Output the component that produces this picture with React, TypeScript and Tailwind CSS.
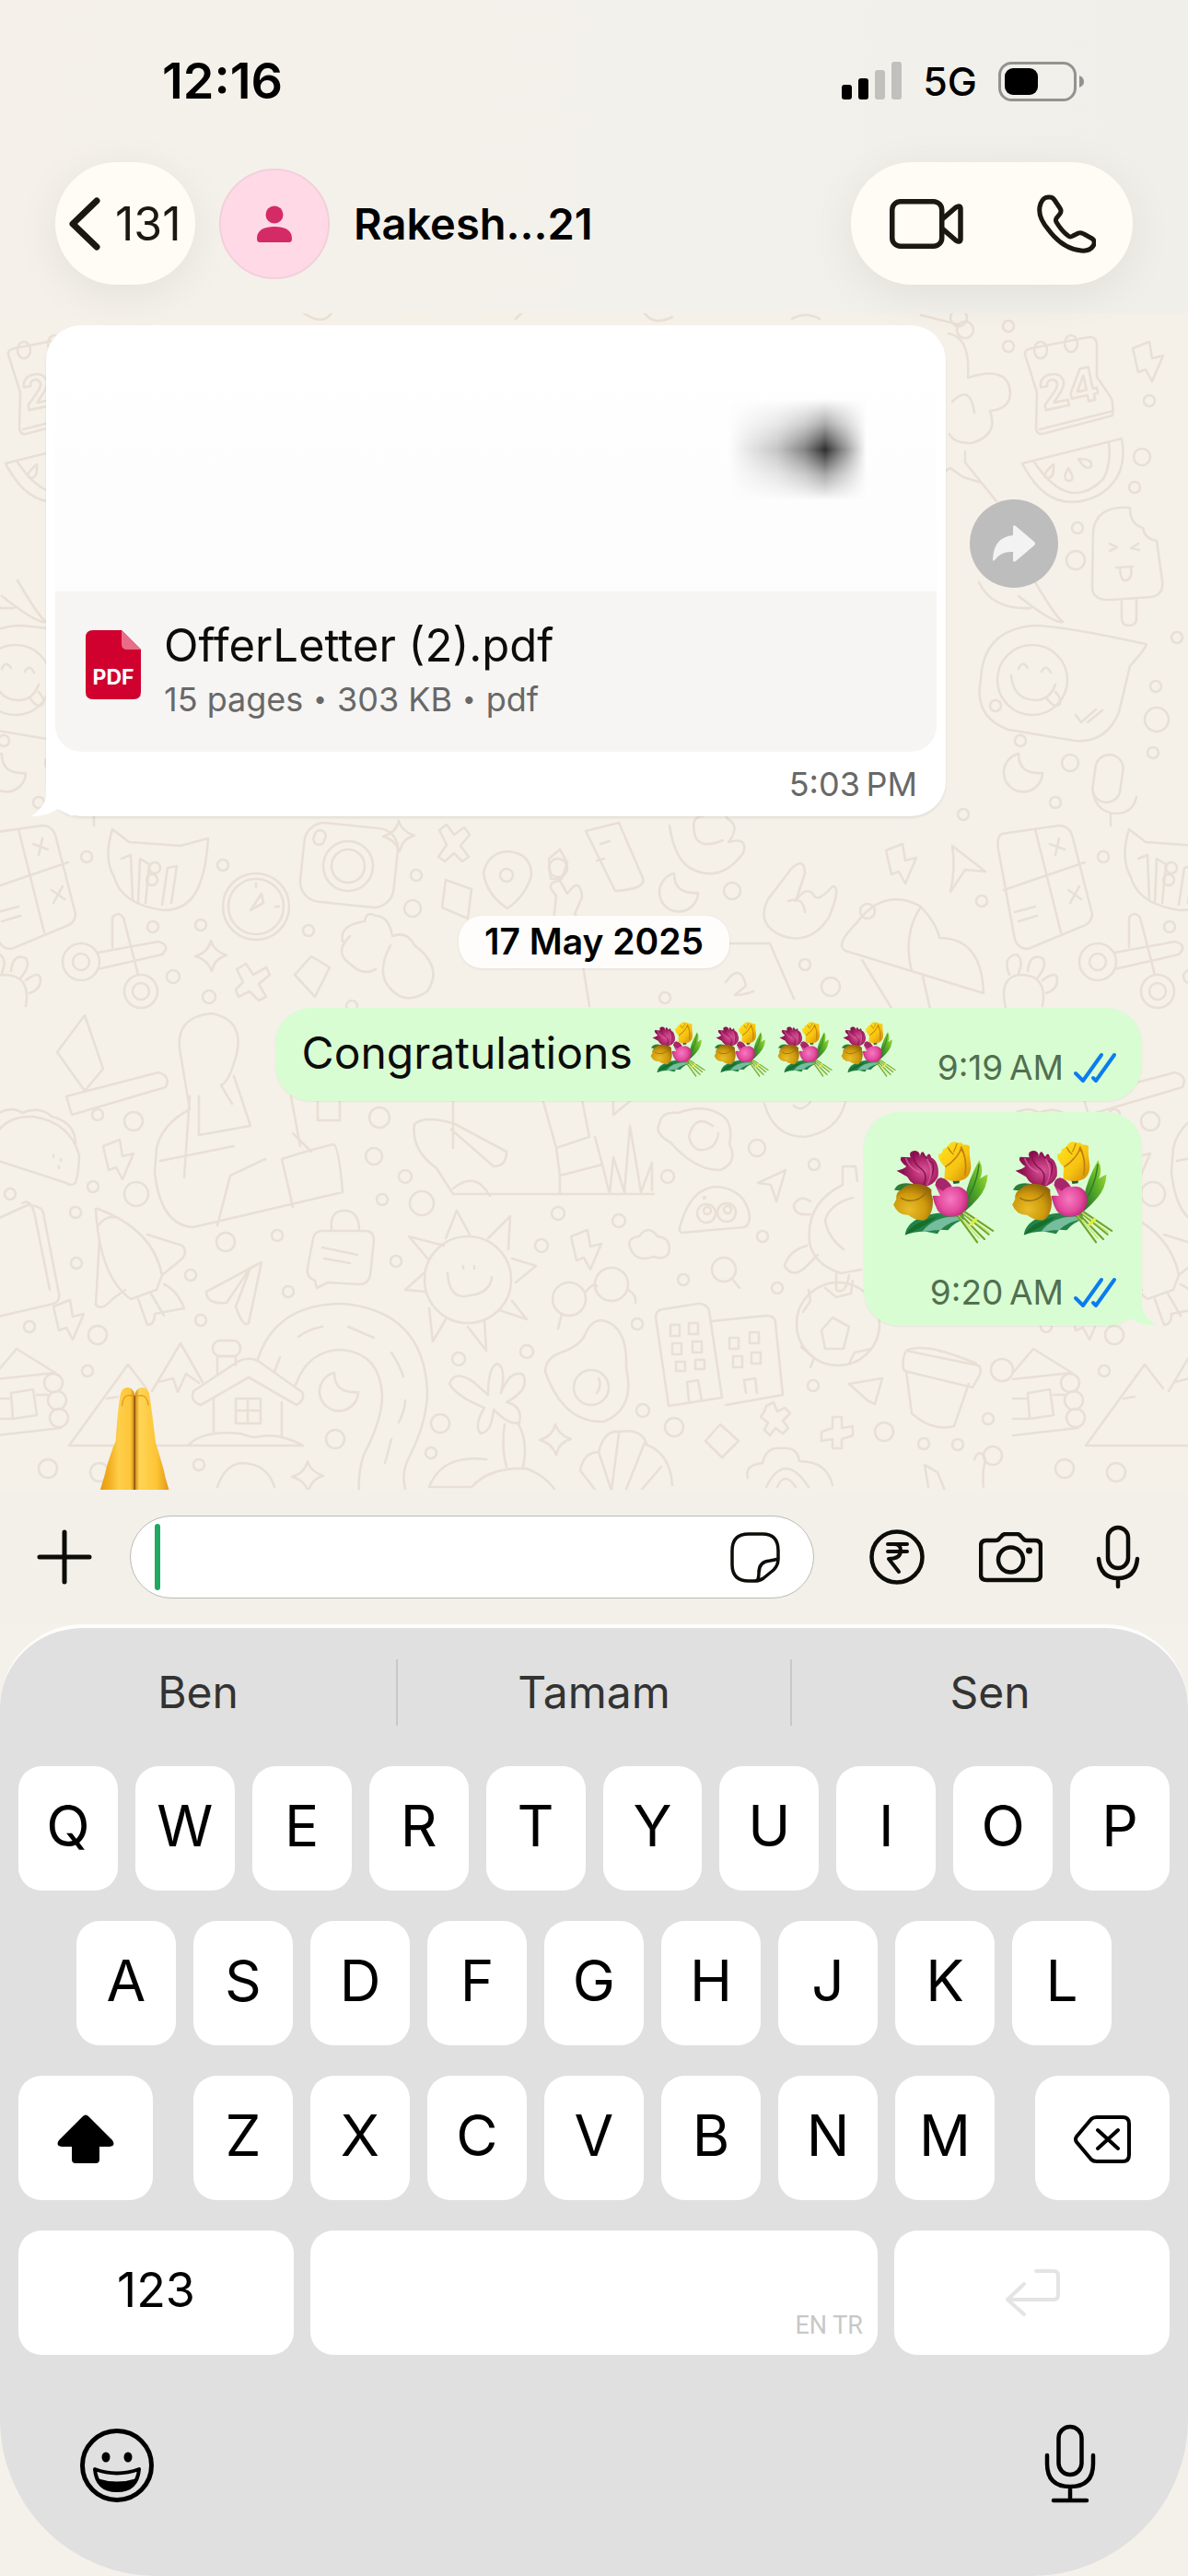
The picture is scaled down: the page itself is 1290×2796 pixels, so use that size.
import React from "react";

const doodle = { fill: "none", strokeLinecap: "round", strokeLinejoin: "round" } as const;

const DOTS: [number, number, number][] = [
  [-9, 354, 6], [-63, 345, 9], [-9, 376, 6], [144, 435, 6], [136, 496, 9], [128, 529, 6], [66, 573, 6], [64, 608, 10],
  [174, 692, 6], [151, 745, 6], [152, 781, 13], [-23, 766, 6], [4, 804, 6], [58, 828, 9], [148, 817, 6], [42, 871, 6],
  [94, 930, 6], [242, 939, 6], [452, 950, 6], [448, 986, 9], [606, 942, 10], [795, 967, 9], [942, 989, 8], [1046, 884, 6],
  [1066, 978, 6], [218, 1004, 6], [166, 1006, 6], [335, 1010, 6], [188, 1060, 7], [227, 1082, 7], [722, 1083, 6], [874, 1047, 6],
  [902, 1071, 10], [382, 1092, 6], [106, 1210, 6], [145, 1217, 10], [412, 1213, 11], [406, 1255, 9], [440, 1277, 7], [148, 1296, 13],
  [101, 1288, 6], [11, 1296, 6], [458, 1306, 13], [415, 1302, 6], [82, 1316, 6], [606, 1317, 7], [672, 1325, 7], [822, 1246, 9],
  [725, 1277, 7], [884, 1264, 6], [245, 1348, 10], [301, 1341, 6], [588, 1352, 7], [828, 1342, 6], [430, 1369, 6], [83, 1371, 6],
  [742, 1389, 6], [844, 1398, 6], [207, 1384, 6], [313, 1402, 6], [32, 1440, 6], [106, 1449, 10], [218, 1433, 6], [692, 1437, 6],
  [572, 1467, 7], [498, 1475, 7], [95, 1488, 6], [1088, 1487, 12], [883, 1504, 6], [698, 1531, 7], [478, 1545, 10], [364, 1562, 10],
  [468, 1577, 6], [52, 1594, 10], [108, 1598, 10], [216, 1590, 6], [732, 1549, 10], [960, 1554, 10], [1073, 1540, 6], [1003, 1567, 6],
  [1040, 1568, 6], [1078, 1580, 10], [765, 1300, 1], [650, 402, 8], [1048, 358, 9],
];

function bolt(x: number, y: number) {
  return `M${x} ${y + 8}l18 -7 3 18 12 -3 -12 28 -7 -13 -8 3z`;
}
function moon(x: number, y: number) {
  return `M${x + 18} ${y}a21 21 0 1 0 26 21q-26 2 -26 -21z`;
}
function sparkle(x: number, y: number) {
  return `M${x} ${y - 17}q3 11 17 16q-13 3 -16 17q-5 -13 -18 -16q14 -4 17 -17z`;
}

function Doodles() {
  return (
    <g {...doodle}>
      {DOTS.map(([x, y, r], i) => (
        <circle key={i} cx={x} cy={y} r={r} />
      ))}
      <path d={bolt(126, 370)} />
      <path d={bolt(962, 915)} />
      <path d={bolt(112, 1236)} />
      <path d={bolt(620, 1334)} />
      <path d={bolt(58, 1410)} />
      <path d={moon(-16, 818)} />
      <path d={moon(714, 948)} />
      <path d={moon(345, 1490)} />
      <path d={sparkle(433, 908)} />
      <path d={sparkle(229, 1038)} />
      <path d={sparkle(603, 1563)} />
      <path d={sparkle(334, 1603)} />
      {/* calendar */}
      <path d="M10 388q-4 -8 6 -10l62 -12q8 -1 9 7l0 36l15 22q3 5 2 20l-76 20q-6 1 -7 -6l1 -39z" />
      <path d="M25 466l80 -20" />
      <ellipse cx="26" cy="380" rx="7" ry="9" />
      <ellipse cx="59" cy="373" rx="7" ry="9" />
      <text x="24" y="440" fontSize="50" fontWeight="700" transform="rotate(-12 54 420)" className="font-['Inter',sans-serif]">24</text>
      {/* melon */}
      <path d="M6 503l108 -27q8 42 -26 62q-52 24 -82 -35zM18 500q38 58 76 20q9 -16 6 -40" />
      <path d="M40 504q-12 10 -9 14q10 4 9 -14zM56 508q-7 12 0 14q9 0 0 -14zM67 498q8 14 14 8q2 -8 -14 -8z" />
      {/* ice lolly */}
      <path d="M83 576q4 -28 40 -25q0 18 14 22q2 12 15 14l6 43q2 16 -12 18l-44 3q-20 1 -20 -14zM114 653l0 18q0 8 8 8q8 0 8 -8l0 -20" />
      <path d="M101 590l8 4l-8 4M132 590l-8 5l9 2M108 616l18 -1M112 616q1 16 7 14q7 -2 5 -14" />
      {/* speech bubble with face */}
      <path d="M18 679q30 0 122 20q4 0 -17 24l-12 50q-14 34 -48 31l-72 -12q-38 -14 -30 -54q2 -54 57 -59z" />
      <circle cx="17" cy="738" r="38" />
      <path d="M-6 733q2 26 26 27q16 0 22 -17M2 726q4 -10 10 -1M27 729q5 -9 10 1M32 757q8 12 14 8q4 -5 -4 -14M64 776l6 8l16 -14M77 784l16 -13" />
      {/* cloud, volcano, bird */}
      <path d="M-74 362q24 4 21 48q44 -14 46 16q0 18 -22 20q10 26 -20 35q-20 0 -24 -10M-70 436q20 -20 24 12M-56 490l0 12l34 42M-86 516l14 -8l14 10l20 6" />
      <path d="M-41 632q14 30 56 28M19 630q22 38 31 45q-10 2 -48 -28" />
      {/* microphone */}
      <rect x="84" y="819" width="30" height="52" rx="15" transform="rotate(8 99 845)" />
      <path d="M82 854q2 28 26 29q18 0 22 -18M102 884l0 12" />
      {/* jar, stopwatch, camera */}
      <path d="M122 900l18 14l56 4l30 -8q-2 30 -8 46q-10 32 -40 32q-46 -6 -54 -36q-12 -20 -2 -52z" />
      <path d="M132 932l10 -4l2 48M150 980l2 -48l10 6l-4 42M176 982l6 -40l10 -2l-6 40" />
      <circle cx="168" cy="942" r="6" /><circle cx="165" cy="955" r="6" />
      <circle cx="278" cy="984" r="36" /><circle cx="278" cy="984" r="30" />
      <path d="M272 988l12 -18l2 10zM278 959v4M303 984h-4" />
      <rect x="328" y="896" width="102" height="86" rx="22" transform="rotate(6 379 939)" />
      <circle cx="378" cy="940" r="27" /><circle cx="378" cy="940" r="18" />
      <rect x="341" y="901" width="12" height="16" rx="6" transform="rotate(20 347 909)" />
      {/* cross, map pin, bottle */}
      <path d="M477 901l8 -6l8 11l11 -8l6 8l-10 12l9 12l-7 5l-9 -9l-10 9l-7 -5l9 -13zM257 1052l10 -6l8 12l14 -8l4 8l-12 10l8 14l-8 4l-10 -10l-12 6l-3 -8l8 -8z" />
      <path d="M551 924q26 2 26 26q-6 22 -26 36q-22 -14 -26 -38q4 -22 26 -24z" /><circle cx="550" cy="950" r="7" />
      <path d="M636 902l36 -9l26 60q4 12 -30 14zM652 916l10 -3M648 934l8 -2M484 955l28 10l-4 32l-28 -12zM596 932l12 -10l8 14l-6 18h-12z" />
      {/* hands */}
      <path d="M727 896q6 40 26 48q30 14 54 -18q6 -18 -16 -12q14 -18 -2 -26q0 -20 -26 -2q-14 0 -8 22q6 14 30 4M860 942q14 -12 14 6l-10 30q12 -18 20 -6q4 8 20 -10q10 0 -4 34q-20 30 -50 20q-30 -12 -16 -40zM856 978q16 -6 18 12" />
      <path d="M1034 918l36 28l-22 -2l-16 24q6 -26 2 -50z" />
      {/* calculator */}
      <path d="M-16 905l62 -9q10 0 14 10l22 86q0 10 -12 14l-58 24q-10 0 -14 -10l-18 -98q-2 -14 4 -17zM-14 966l88 -30M20 900l28 112M36 916l16 6M46 910l-4 18M56 966l14 10M68 962l-10 18M-2 990l22 -6M2 1000l20 -6" />
      {/* scissors, gourd, parasol, page */}
      <circle cx="88" cy="1044" r="20" /><circle cx="88" cy="1044" r="9" /><circle cx="153" cy="1076" r="18" /><circle cx="153" cy="1076" r="9" />
      <path d="M106 1034l66 -12q14 4 4 14l-70 16M122 1028l0 -32q6 -8 12 0l16 62" />
      <path d="M372 1022q-4 -18 24 -22q2 -12 12 -6q14 0 18 22q16 -6 24 10q32 24 14 50q-26 18 -44 -8q-10 -16 4 -42M380 1016q-18 18 0 30q14 14 28 6M320 1058l18 -20l20 12l-16 32z" />
      <path d="M930 1002q30 -40 70 -18q18 20 20 34q46 0 48 60l-150 -46q-12 -6 12 -30zM936 1042l38 62M1002 1060l10 44M1000 984q-20 30 -10 70M600 1010l4 -38q-14 -14 4 -16l8 14q14 -20 16 4l-8 18l14 18M562 1050l10 -8h60l8 50M748 1046l44 -22h44l26 60M788 1066q16 -22 22 4l-12 10q10 0 20 -4" />
      <path d="M-10 1090q-8 -34 16 -36q30 0 24 34M-6 1054q-8 -20 8 -22q8 6 2 20M14 1050q2 -20 16 -14q6 8 -6 22M30 1060q16 -12 16 0q0 10 -12 14" transform="translate(-2 4)" />
      {/* figure with boxes */}
      <path d="M196 1144q-8 -40 34 -44q40 8 24 54q-6 20 -14 24l12 20M196 1144l10 60q-30 16 -36 42l-2 26q6 58 42 60l162 -38q-4 -50 -10 -52q-18 4 -56 16l12 52M216 1190l0 42l56 -10l-18 -54M174 1260l80 -16M236 1330l14 -54l38 -18M206 1190l-6 88M316 1190l10 54M318 1230l20 20M62 1142l30 -40l20 58l-20 24zM72 1190l100 -26q14 4 8 16l-102 30z" />
      {/* taco, chips bag */}
      <path d="M-14 1266q4 -56 50 -54q40 6 50 42q0 16 -4 30q-6 4 -10 0l-86 -28M-10 1214q20 -16 34 -6q20 -8 32 4q26 6 26 30M58 1254v2M66 1258v2M64 1266v2M-10 1326l40 -18q18 0 18 14l16 82q2 10 -10 12l-60 14M24 1306q10 -6 14 14l16 80" />
      {/* boot and grass */}
      <path d="M492 1196v50M450 1220q12 -10 44 0l56 30q0 16 -14 16l-46 -40M450 1220q-4 28 24 48l18 28h218M492 1290q24 -20 40 8M590 1196l14 50l36 -12l-8 -40M604 1246l4 30l46 -12l-8 -30M608 1276v18M654 1264l8 32M662 1296l4 -40l12 38l6 -72l12 72l12 -32v30M666 1196l0 14l22 -18M345 1190v26h24v-26" />
      {/* snail cloud, helmet, dart, turtle */}
      <path d="M716 1220q2 -14 20 -12q32 -12 52 6q8 10 4 28q10 20 -10 28q-28 0 -54 -30q-18 -10 -12 -20zM774 1222q-20 -14 -26 12q6 22 26 10q6 -8 6 -14" />
      <path d="M740 1338q-4 -2 0 -12q12 -38 40 -38q30 4 34 32q0 10 -6 12z" />
      <circle cx="767" cy="1317" r="10" /><circle cx="789" cy="1316" r="10" /><circle cx="768" cy="1314" r="4" /><circle cx="790" cy="1313" r="4" />
      <path d="M823 1284l30 -14l-10 34l-6 -18z" />
      <path d="M915 1266h14l2 16M915 1266v20q-40 20 -36 62q4 24 34 34l22 -4M896 1324q6 -18 30 -24M896 1324q2 18 20 32M880 1318q-18 2 -18 -10q6 -12 18 -4M876 1352q-20 6 -24 22q8 14 22 2l14 -14M908 1382v18q10 6 14 -16M830 1198q10 36 44 36q36 -6 44 -38M862 1200q8 8 18 -4" />
      <path d="M686 1358q-8 -14 8 -16q10 -14 20 0q16 2 12 18q-4 8 -16 4q-18 6 -24 -6z" />
      <circle cx="786" cy="1378" r="13" /><path d="M795 1388l8 10" />
      {/* sun */}
      <circle cx="508" cy="1389" r="47" />
      <path d="M466 1368l-22 -26l38 10M484 1344l12 -30l14 26M530 1344l24 -24l-2 36M556 1366l26 8l-22 18M556 1412l16 20l-30 -10M526 1434l2 32l-20 -26M484 1432l-14 24l-4 -36M462 1402l-22 -2l20 -18M486 1382q2 30 24 24q22 -2 24 -20M503 1374v3M515 1374v3" />
      {/* note, rocket, paper plane, glasses */}
      <path d="M340 1344q2 -8 10 -8h46q10 0 10 10l-4 38q-2 10 -12 10l-34 -2l-12 6l-2 -8q-10 -4 -8 -14zM360 1334q-2 -20 14 -20q16 0 16 22M350 1354l38 8M352 1366l28 5" />
      <path d="M106 1312q60 22 70 72l-6 16l-28 10q-34 -24 -38 -98zM176 1384l22 -18q6 -8 0 -14l-38 -12M108 1346l-4 70q6 8 18 -6l14 -10M150 1410l10 28q8 0 8 -12l32 -6q-8 -20 -22 -26M164 1404l14 24M107 1330q8 -12 22 -8" />
      <path d="M284 1370l-60 32q0 14 22 12l26 -38l-16 42q8 24 14 18z" />
      <circle cx="618" cy="1410" r="18" /><circle cx="664" cy="1394" r="18" />
      <path d="M636 1402q8 -10 12 -6M610 1426l-4 16M682 1400q10 6 8 14" />
      {/* road */}
      <path d="M280 1475q20 -60 92 -60q88 8 92 95q0 34 -20 72q-10 20 -2 40M321 1503q14 -38 50 -38q42 4 44 50q0 26 -20 64q-8 24 -4 50M324 1451q10 -8 26 -11M378 1440l28 12M425 1468q8 12 13 26M440 1520q0 10 -7 24M425 1562l-7 26M304 1473l-6 16" />
      {/* mountains and house */}
      <path d="M75 1569l64 -88l20 26M116 1518l12 -2M165 1510l31 -52l24 42M172 1500l16 -4l5 15l9 -20l14 10M75 1569h254M205 1568q16 -16 56 -12q12 4 16 4q24 -6 50 8M232 1518v36M306 1522v36" />
      <path d="M210 1510l48 -32q12 -6 22 -1l48 34q4 8 -6 14l-52 -30l-52 30q-12 -4 -8 -15zM236 1490v-18h20v10" />
      <rect x="231" y="1455" width="30" height="17" rx="8" />
      <path d="M256 1518h27v27h-27zM269 1518v27M256 1531h27" />
      {/* log cabin */}
      <path d="M-4 1490l22 -26l42 26l-64 7M-4 1518h14M40 1514h12M-4 1558l70 -8M12 1512l24 -4l4 28l-26 4zM-4 1540h18" />
      <circle cx="58" cy="1501" r="10" /><circle cx="62" cy="1520" r="10" /><circle cx="64" cy="1539" r="10" />
      {/* egg, buildings, football */}
      <path d="M654 1433q28 6 26 52q10 44 -24 58q-44 2 -64 -54q0 -16 20 -22q20 -8 24 -20q6 -14 18 -14z" /><circle cx="642" cy="1506" r="19" /><path d="M650 1496q4 8 -2 16" />
      <path d="M726 1526l-14 -96q0 -8 8 -9l38 -6q10 0 12 8l14 94zM772 1434l60 -6q10 0 10 8l8 78l-62 11M748 1520l-2 -20l12 -2l4 22M810 1512l-2 -14l12 -2l2 16" />
      <path d="M728 1438h10v12h-10zM748 1436h10v12h-10zM730 1458h10v12h-10zM752 1456h10v12h-10zM734 1478h10v10h-10zM755 1476h10v10h-10zM792 1452h10v12h-10zM814 1446h10v12h-10zM796 1472h10v12h-10zM816 1468h10v12h-10z" />
      <circle cx="910" cy="1437" r="45" />
      <path d="M892 1444l12 -14l18 10l-6 24h-20zM896 1398l12 10l16 -4l2 -14M872 1424l8 -12l-2 -12M870 1462l14 12l-4 10M922 1480l6 -12l18 -4" />
      {/* palm, croissant, flower cloud */}
      <path d="M548 1546q-4 24 2 46M562 1544q12 20 6 48M526 1528q-30 -12 -38 -26q6 -16 26 -2l16 14q0 -30 10 -34q10 4 4 32q10 -26 24 -20q8 16 -18 30q18 4 14 22q-10 4 -28 -14q-2 24 -14 26q-8 -8 4 -28M466 1614q14 -36 62 -30M466 1614h46q20 -22 60 -20q20 8 30 22M630 1596q4 -20 20 -20q6 -24 22 -22q26 -4 30 14q26 10 28 44M630 1596l20 26l14 -4l-14 -42M664 1618l8 -62M680 1616l20 -50M694 1620l24 -28M812 1604q-4 -14 16 -16q4 -18 20 -16q18 -2 20 14q30 0 36 26M832 1614q20 -40 46 0M844 1614q8 -18 20 0" />
      <path d="M832 1526l8 -4l4 10l8 -4l6 6l-8 8l6 8l-6 6l-8 -6l-6 8l-6 -6l4 -8l-8 -6l4 -6zM904 1538h10v12l12 -2v10l-12 4v10h-10v-10l-12 2v-10l12 -4zM766 1564l16 -18l20 18l-18 18zM922 1502l36 -6l-8 28l-8 -4z" />
      {/* cup */}
      <path d="M984 1466l78 16q4 2 2 10l-8 14l-74 -18q-4 -10 2 -22zM984 1488l6 46q22 20 46 14l16 -46M984 1466q20 -10 76 14" />
      <path d="M236 1614q8 -24 26 -26q28 0 36 26M1008 1614l-4 -24l14 8l8 20M1058 1584q6 -14 12 0q-4 16 -2 30" />
      {/* top strip above the document card */}
      <path d="M330 340q20 14 30 0M560 346l10 -10M700 340q10 14 30 4M860 346q14 -8 30 0M1000 342l40 10" />
    </g>
  );
}

function Wallpaper() {
  return (
    <svg aria-hidden="true" className="pointer-events-none absolute inset-0 h-full w-full" viewBox="0 340 1290 1277" preserveAspectRatio="xMinYMin slice" stroke="#e9dfd5" strokeWidth="2.6">
      <Doodles />
      <g transform="translate(1104 0)">
        <Doodles />
      </g>
    </svg>
  );
}

function Bouquet({ id, className }: { id: string; className: string }) {
  const g = (n: string) => `url(#${id}${n})`;
  return (
    <svg role="img" aria-label="Bouquet" viewBox="0 0 340 344" className={className}>
      <defs>
        <radialGradient id={`${id}p`} cx=".65" cy=".55"><stop offset="0" stopColor="#d9569a" /><stop offset=".6" stopColor="#b42a6e" /><stop offset="1" stopColor="#8a1250" /></radialGradient>
        <linearGradient id={`${id}y`} x1="0" y1="0" x2="1" y2="1"><stop offset="0" stopColor="#ffe51c" /><stop offset=".6" stopColor="#f6c312" /><stop offset="1" stopColor="#cf8606" /></linearGradient>
        <radialGradient id={`${id}o`} cx=".4" cy=".7" r=".7"><stop offset="0" stopColor="#e8bd2a" /><stop offset=".6" stopColor="#cf9a0c" /><stop offset="1" stopColor="#94660a" /></radialGradient>
        <radialGradient id={`${id}k`} cx=".5" cy=".55"><stop offset="0" stopColor="#f47ac0" /><stop offset=".65" stopColor="#e44b9f" /><stop offset="1" stopColor="#c02878" /></radialGradient>
        <linearGradient id={`${id}l`} x1="1" y1="0" x2="0" y2="1"><stop offset="0" stopColor="#b2e83a" /><stop offset=".5" stopColor="#58ad27" /><stop offset="1" stopColor="#1d6b2c" /></linearGradient>
      </defs>
      <g transform="scale(1.17 1)">
        <path d="M5 166q8-22 34-22q28 2 44 12l-20 20z" fill="#2f7d36" />
        <path d="M205 215q0-58 42-148q14 30 2 62q14-12 22-14q-2 46-28 80q-16 22-38 44z" fill={g("l")} />
        <path d="M246 80q-4 60-34 120" fill="none" stroke="#2d7d28" strokeWidth="4" />
        <path d="M36 316q4-46 62-66q48-14 104-10l2 24q-28 10-46 36l-22-2-8 14-36-8q-34 2-56 12z" fill="#238347" />
        <path d="M84 306q30-50 96-52l24 10q-40 4-68 36l-16 0z" fill="#75bd9c" />
        <path d="M36 316q20-42 92-62q-28 30-92 62z" fill="#15702f" />
        <path d="M168 120l6 26 16-2 2-20z" fill="#245f28" />
        <path d="M185 250l56 90M192 246l70 84M198 242l76 72M202 236l84 66" fill="none" stroke="#72a52b" strokeWidth="6" strokeLinecap="round" />
        <path d="M188 250l60 78M200 242l76 66" fill="none" stroke="#c1df4f" strokeWidth="3" />
        <path d="M12 102q20-4 28-14q-24-22-14-32q10 0 26 2q-8-22 14-22q14 4 12 22q2-20 10-18q4 8 8 16q10-20 14 2q24 14 20 62q-10 30-40 36q-34-2-48-34z" fill={g("p")} />
        <path d="M62 38q-10 32 22 60q18 18 4 54M86 42q10 24 28 34q10 30-18 76" fill="none" stroke="#82134d" strokeWidth="4" />
        <path d="M38 60q10 34 40 48M98 62q24 44 0 88" fill="none" stroke="#e56aaa" strokeWidth="5" opacity=".65" />
        <path d="M132 46q10 2 12-16q10-2 16-14q12-16 24-6q14-4 18 6q20-2 18 10q-2 18 2 44q6 42-16 60q-24 14-58 0q0-20 2-40q-24-26-18-44z" fill={g("y")} />
        <path d="M150 90q42-36 46-68q20 50 10 96q6-58-10-86q-18 40-46 58zM158 24q4 14 16 24M184 10q-4 16-10 30" fill="#b86f08" stroke="#c47f0b" strokeWidth="3" />
        <path d="M3 215q4-8 8-18q-2-24 14-32q14-20 40-20q34 2 46 20q-2 14 4 32q2 52-24 70q-24 2-46-18q-30 2-42-34z" fill={g("o")} />
        <path d="M24 192q16 14 40 8q20-6 32-26" fill="none" stroke="#9a6d10" strokeWidth="4" />
        <path d="M122 150q2-24 18-24q18 6 30 30q20-6 34 8q12 8 12 40q-4 34-26 46q-38 14-60-14q-12-22-16-50q10-2 22 0z" fill={g("k")} />
        <path d="M122 150q2-24 18-24q18 6 28 28q-16 4-24 16q-12-8-22-20z" fill="#a72669" />
        <path d="M216 282l20-24 7 6-18 22z" fill="#e1ec45" />
      </g>
    </svg>
  );
}

function PrayingHands() {
  return (
    <svg role="img" aria-label="Folded hands" viewBox="328 316 224 384" className="relative ml-[109px] mt-[66px] block h-[128px] w-[75px] shrink-0">
      <defs>
        <linearGradient id="palmL"><stop offset="0" stopColor="#dc8f0c" /><stop offset=".35" stopColor="#f2ae20" /><stop offset=".6" stopColor="#ffcf4a" /><stop offset=".9" stopColor="#fdc53a" /><stop offset="1" stopColor="#c98312" /></linearGradient>
        <linearGradient id="palmR"><stop offset="0" stopColor="#c98312" /><stop offset=".12" stopColor="#ffd557" /><stop offset=".55" stopColor="#fdc535" /><stop offset="1" stopColor="#d48408" /></linearGradient>
      </defs>
      <path d="M392 345q4-26 24-26q20 0 23 26v355H310q24-62 40-130l20-60q4-6 8-20q4-80 14-145z" fill="url(#palmL)" />
      <path d="M488 345q-4-26-24-26q-20 0-25 26v355h130q-24-56-37-120l-24-80q-10-80-20-155z" fill="url(#palmR)" />
      <path d="M398 380q2-34 20-35q14-2 20 6q8-6 24-6q18 2 22 32" fill="none" stroke="#e39b14" strokeWidth="4" />
      <path d="M439 346v354" stroke="#8a4a05" strokeWidth="4" />
    </svg>
  );
}

function Ticks() {
  return (
    <svg aria-label="Read" role="img" viewBox="0 0 48 34" className="h-[34px] w-12" fill="none" stroke="#0a7cf0" strokeWidth="4" strokeLinecap="round" strokeLinejoin="round">
      <path d="M3 23l8 8L31 3M22 28l3 3L45 3" />
    </svg>
  );
}

function Key({ children, className = "", label }: { children?: React.ReactNode; className?: string; label?: string }) {
  return (
    <button type="button" aria-label={label} className={"flex h-[135px] min-w-0 items-center justify-center rounded-[25px] bg-white pb-1.5 text-[62px] leading-none text-black " + className}>
      {children}
    </button>
  );
}

function IconButton({ label, children, className = "" }: { label: string; children: React.ReactNode; className?: string }) {
  return (
    <button type="button" aria-label={label} className={"flex shrink-0 items-center justify-center " + className}>
      {children}
    </button>
  );
}

function StatusBar() {
  return (
    <div className="flex h-44 items-center justify-between pl-[176px] pr-[113px]">
      <time className="text-[54px] font-semibold leading-none">12:16</time>
      <div className="flex items-center gap-[23px]">
        <svg aria-label="Signal" role="img" viewBox="0 0 65 42" className="h-[42px] w-[65px]">
          <rect x="0" y="25" width="11" height="16" rx="3" />
          <rect x="18" y="18" width="11" height="23" rx="3" />
          <rect x="36" y="9" width="11" height="32" rx="3" fill="#c0c0bd" />
          <rect x="54" y="0" width="11" height="41" rx="3" fill="#c0c0bd" />
        </svg>
        <span className="text-[43px] font-medium leading-none">5G</span>
        <svg aria-label="Battery" role="img" viewBox="0 0 93 43" className="h-[43px] w-[93px]">
          <rect x="1.5" y="1.5" width="82" height="40" rx="13" fill="none" stroke="#929290" strokeWidth="3" />
          <rect x="7" y="7" width="36" height="29" rx="9" />
          <path d="M88 15q5 2 5 6.500t-5 6.500z" fill="#929290" />
        </svg>
      </div>
    </div>
  );
}

function ChatHeader() {
  return (
    <header className="relative z-10 shrink-0 bg-[#f3f0ea] bg-gradient-to-r from-[#f5f1ea] via-[#f3f1eb] to-[#f1efea] pb-[31px]">
      <StatusBar />
      <div className="flex items-center px-[60px]">
        <button type="button" aria-label="Back, 131 unread" className="flex h-[133px] w-[152px] shrink-0 items-center gap-4 rounded-full bg-[#fffcf5] pl-[15px] shadow-[0_10px_50px_rgba(0,0,0,0.07)]">
          <svg viewBox="0 0 34 58" className="h-[58px] w-[34px]" fill="none" stroke="#1c1810" strokeWidth="7" strokeLinecap="round" strokeLinejoin="round">
            <path d="M30 4L4 29l26 25" />
          </svg>
          <span className="text-[50px] leading-none text-[#1c1810]">131</span>
        </button>
        <div className="ml-[26px] flex size-[120px] shrink-0 items-center justify-center rounded-full border-2 border-[#f3cfdc] bg-[#ffdae6]">
          <svg viewBox="0 0 38 40" className="h-10 w-[38px]" fill="#d42a65">
            <circle cx="19" cy="10" r="9.500" />
            <path d="M0 36q0-13 19-13t19 13q0 4-3 4H3q-3 0-3-4z" />
          </svg>
        </div>
        <h1 className="ml-[26px] min-w-0 flex-1 truncate text-[47px] font-semibold leading-[60px]">Rakesh...21</h1>
        <div className="flex h-[133px] w-[306px] shrink-0 items-center gap-[80px] rounded-full bg-[#fffcf5] pl-[42px] shadow-[0_10px_50px_rgba(0,0,0,0.07)]">
          <IconButton label="Video call">
            <svg viewBox="0 0 80 54" className="h-[54px] w-20" fill="none" stroke="#1c1810" strokeWidth="5.500" strokeLinejoin="round">
              <rect x="2.750" y="2.750" width="54" height="48.500" rx="9" />
              <path d="M57 22l15-13q5-3 5 2v32q0 5-5 2L57 32" />
            </svg>
          </IconButton>
          <IconButton label="Voice call">
            <svg viewBox="0 0 64 64" className="size-16" fill="none" stroke="#1c1810" strokeWidth="5" strokeLinejoin="round">
              <path d="M4 10q3-8 10-7q3 0 5 3l6 9q2 3 0 6l-4 5q-1 2 0 4q6 10 13 15q2 2 5 0l6-3q3-1 6 1l9 5q4 3 1 8q-4 6-13 5q-20-2-35-22Q-1 23 4 10z" />
            </svg>
          </IconButton>
        </div>
      </div>
    </header>
  );
}

function DocumentMessage() {
  return (
    <div className="relative flex shrink-0 items-center gap-[26px] pl-[50px] pr-[141px]">
      <article className="relative min-w-0 flex-1 rounded-[38px] bg-white px-[10px] pt-[10px] shadow-[0_2px_3px_rgba(0,0,0,0.08)]">
        <svg aria-hidden="true" viewBox="0 0 45 50" className="absolute -left-[16px] bottom-0 h-[50px] w-[45px]" fill="#fff">
          <path d="M16 0v30q-4 12-16 20q18 0 28-8l17 8V0z" />
        </svg>
        <div className="relative overflow-hidden rounded-[28px]">
          <div className="relative h-[279px] bg-[#fdfdfd] bg-gradient-to-b from-white to-[#fcfcfc]">
            <svg aria-hidden="true" viewBox="0 0 150 110" className="absolute right-[76px] top-[70px] h-[110px] w-[150px]">
              <defs>
                <linearGradient id="spotH">
                  <stop offset="0" stopColor="#444" stopOpacity="0" />
                  <stop offset=".35" stopColor="#444" stopOpacity=".3" />
                  <stop offset=".55" stopColor="#333" stopOpacity=".6" />
                  <stop offset=".7" stopColor="#222" stopOpacity=".95" />
                  <stop offset=".85" stopColor="#333" stopOpacity=".5" />
                  <stop offset="1" stopColor="#444" stopOpacity="0" />
                </linearGradient>
                <linearGradient id="spotV" x2="0" y2="1">
                  <stop offset="0" stopColor="#000" />
                  <stop offset=".25" stopColor="#666" />
                  <stop offset=".5" stopColor="#fff" />
                  <stop offset=".75" stopColor="#666" />
                  <stop offset="1" stopColor="#000" />
                </linearGradient>
                <mask id="spotMask"><rect width="150" height="110" fill="url(#spotV)" /></mask>
              </defs>
              <rect width="150" height="110" fill="url(#spotH)" mask="url(#spotMask)" />
            </svg>
          </div>
          <div className="flex h-[174px] items-center gap-[25px] bg-[#f6f5f3] pl-[33px]">
            <svg aria-label="PDF" role="img" viewBox="0 0 60 75" className="mb-4 h-[75px] w-[60px] shrink-0">
              <path d="M8 0h31l21 21v46q0 8-8 8H8q-8 0-8-8V8q0-8 8-8z" fill="#d0002f" />
              <path d="M39 0l21 21H45q-6 0-6-6z" fill="#e96d88" />
              <text x="30" y="59" textAnchor="middle" fontSize="23" fontWeight="700" fill="#fff" className="font-['Inter',sans-serif]">PDF</text>
            </svg>
            <div className="mb-1 min-w-0">
              <div className="truncate text-[49px] leading-[64px] text-[#0c0c0c]">OfferLetter (2).pdf</div>
              <div className="flex items-center gap-[11px] whitespace-nowrap text-[36px] leading-[52px] text-[#686868]">
                <span>15 pages</span>
                <span className="text-[26px]">•</span>
                <span>303 KB</span>
                <span className="text-[26px]">•</span>
                <span>pdf</span>
              </div>
            </div>
          </div>
        </div>
        <div className="flex h-[70px] items-center justify-end pr-[21px] text-[36px] text-[#686868]">
          <time>5:03&#8239;PM</time>
        </div>
      </article>
      <IconButton label="Forward" className="mb-[60px] size-24 rounded-full bg-[#bdbdbd]">
        <svg viewBox="0 0 46 40" className="h-10 w-[46px]" fill="#f3f3f3">
          <path d="M22 2q0-3 3-1l20 17q2 2 0 4L25 39q-3 2-3-1v-9q-13-1-20 9q-2 2-2-1Q1 13 22 11z" />
        </svg>
      </IconButton>
    </div>
  );
}

function Chat() {
  return (
    <main className="relative flex min-h-0 flex-1 flex-col overflow-hidden bg-[#f5f1e9] pt-[13px]">
      <Wallpaper />
      <DocumentMessage />
      <div className="relative mt-[108px] flex h-[57px] shrink-0 items-center self-center rounded-[26px] bg-[#fefdfb] px-7 text-[39px] font-semibold shadow-[0_1px_3px_rgba(0,0,0,0.08)]">17 May 2025</div>
      <article className="relative mr-[50px] mt-[43px] flex h-[101px] shrink-0 items-center self-end rounded-[38px] bg-[#d9fdd3] pl-[29px] pr-[27px] shadow-[0_1px_2px_rgba(0,0,0,0.06)]">
        <p className="pb-1 text-[48px] leading-none text-[#0c0c0c]">Congratulations</p>
        <div className="mb-3 ml-[19px] flex gap-[9px]">
          <Bouquet id="a" className="h-[61px] w-[60px]" />
          <Bouquet id="b" className="h-[61px] w-[60px]" />
          <Bouquet id="c" className="h-[61px] w-[60px]" />
          <Bouquet id="d" className="h-[61px] w-[60px]" />
        </div>
        <div className="ml-[45px] mt-[28px] flex items-center gap-[10px] text-[37px] leading-none text-[#51704f]">
          <time>9:19&#8239;AM</time>
          <Ticks />
        </div>
      </article>
      <article className="relative mr-[50px] mt-3 flex h-[232px] w-[302px] shrink-0 flex-col self-end rounded-[38px] bg-[#d9fdd3] pt-[30px] shadow-[0_1px_2px_rgba(0,0,0,0.06)]">
        <svg aria-hidden="true" viewBox="0 0 45 50" className="absolute -right-[16px] bottom-0 h-[50px] w-[45px]" fill="#d9fdd3">
          <path d="M29 0v30q4 12 16 20q-18 0-28-8L0 50V0z" />
        </svg>
        <div className="flex justify-center gap-[18px]">
          <Bouquet id="e" className="h-[113px] w-[111px]" />
          <Bouquet id="f" className="h-[113px] w-[111px]" />
        </div>
        <div className="relative mt-[34px] flex items-center justify-end gap-[10px] pr-[27px] text-[37px] leading-none text-[#51704f]">
          <time>9:20&#8239;AM</time>
          <Ticks />
        </div>
      </article>
      <PrayingHands />
    </main>
  );
}

function Composer() {
  return (
    <form className="flex h-[146px] shrink-0 items-center bg-[#f3f0ea] pl-10 pr-[52px]" onSubmit={(e) => e.preventDefault()}>
      <IconButton label="Attach" className="size-[60px]">
        <svg viewBox="0 0 60 60" className="size-[60px]" stroke="#0c0c08" strokeWidth="5" strokeLinecap="round"><path d="M30 3v54M3 30h54" /></svg>
      </IconButton>
      <div className="ml-[41px] flex h-[90px] min-w-0 flex-1 items-center rounded-full border border-[#bcbab6] bg-white pl-[26px] pr-[35px]">
        <span aria-hidden="true" className="h-[72px] w-1.5 rounded-full bg-[#1fa862]" />
        <input aria-label="Message" type="text" className="h-full min-w-0 flex-1 bg-transparent pl-2 text-[48px] outline-none" />
        <IconButton label="Stickers">
          <svg viewBox="0 0 55 55" className="size-[55px]" fill="none" stroke="#0c0c08" strokeWidth="3.500" strokeLinejoin="round" strokeLinecap="round">
            <path d="M52 29V20Q52 2 35 2H20Q2 2 2 20v15q0 18 18 18h6q6 0 10-3l11-9q5-5 5-12zM52 29Q49 30 43 31q-12 1-12 13q0 6-2 9" />
          </svg>
        </IconButton>
      </div>
      <IconButton label="Payment" className="ml-[60px]">
        <svg viewBox="0 0 60 60" className="size-[60px]" fill="none" stroke="#0c0c08" strokeWidth="4.500" strokeLinecap="round" strokeLinejoin="round">
          <circle cx="30" cy="30" r="27.500" />
          <path d="M20 16h21M20 24h21M27 16q7 0 7 7q0 9-13 9l11 14" strokeWidth="4" />
        </svg>
      </IconButton>
      <IconButton label="Camera" className="ml-[59px]">
        <svg viewBox="0 0 69 55" className="h-[55px] w-[69px]" fill="none" stroke="#0c0c08" strokeWidth="4.500" strokeLinejoin="round">
          <path d="M8 9h10q3 0 4-2l2-2q2-3 5-3h12q3 0 5 3l2 2q1 2 4 2h9q6 0 6 6v31q0 6-6 6H8q-6 0-6-6V15q0-6 6-6z" />
          <circle cx="34.500" cy="30" r="13.500" />
          <circle cx="54.500" cy="20" r="3.500" fill="#0c0c08" stroke="none" />
        </svg>
      </IconButton>
      <IconButton label="Voice message" className="ml-[58px]">
        <svg viewBox="0 0 48 70" className="h-[70px] w-12" fill="none" stroke="#0c0c08" strokeWidth="4.500" strokeLinecap="round">
          <rect x="13" y="3" width="22" height="44" rx="11" />
          <path d="M3 37q2 21 21 21t21-21M24 58v9" />
        </svg>
      </IconButton>
    </form>
  );
}

function Keyboard() {
  return (
    <section aria-label="Keyboard" className="shrink-0 rounded-b-[170px] rounded-t-[90px] border-t-4 border-[#fdfdfc] bg-[#e0e0e0]">
      <div className="grid h-[150px] grid-cols-3 items-center pb-2.5 text-[48px] text-[#333]">
        <button type="button">Ben</button>
        <button type="button" className="h-[72px] border-x-2 border-[#c8c8c8]">Tamam</button>
        <button type="button">Sen</button>
      </div>
      <div className="flex flex-col gap-[33px] px-5">
        <div className="grid grid-cols-10 gap-[19px]">
          {"QWERTYUIOP".split("").map((k) => <Key key={k}>{k}</Key>)}
        </div>
        <div className="grid grid-cols-9 gap-[19px] px-[63px]">
          {"ASDFGHJKL".split("").map((k) => <Key key={k}>{k}</Key>)}
        </div>
        <div className="flex gap-11">
          <Key label="Shift" className="flex-[146]">
            <svg viewBox="0 0 62 54" className="mt-2 h-[54px] w-[62px]"><path d="M28 2q3-3 6 0l26 26q4 6-3 7H46v14q0 4-4 4H20q-4 0-4-4V35H5q-7-1-3-7z" /></svg>
          </Key>
          <div className="grid flex-[870] grid-cols-7 gap-[19px]">
            {"ZXCVBNM".split("").map((k) => <Key key={k}>{k}</Key>)}
          </div>
          <Key label="Delete" className="flex-[146]">
            <svg viewBox="0 0 62 52" className="mt-2 h-[52px] w-[62px]" fill="none" stroke="#000" strokeWidth="4" strokeLinecap="round" strokeLinejoin="round">
              <path d="M25 2h28q7 0 7 7v34q0 7-7 7H25q-4 0-6-2L3 29q-2-3 0-6L19 4q2-2 6-2zM26 16l22 20M48 16L26 36" />
            </svg>
          </Key>
        </div>
        <div className="flex gap-[18px]">
          <Key className="flex-[299]"><span className="text-[52px]">123</span></Key>
          <Key label="Space" className="relative flex-[616]">
            <span className="absolute bottom-3 right-4 font-['Roboto',sans-serif] text-[27px] leading-10 text-[#c8c8c8]">EN TR</span>
          </Key>
          <Key label="Return" className="flex-[299]">
            <svg viewBox="0 0 60 52" className="mt-1 h-[52px] w-[60px]" fill="none" stroke="#e4e4e4" strokeWidth="4" strokeLinecap="round" strokeLinejoin="round">
              <path d="M34 3h19q5 0 5 5v21q0 5-5 5H3M21 17L3 34l18 16" />
            </svg>
          </Key>
        </div>
      </div>
      <div className="flex h-60 items-center justify-between pl-[87px] pr-[100px]">
        <IconButton label="Emoji">
          <svg viewBox="0 0 80 80" className="size-20" fill="none" stroke="#000" strokeWidth="5">
            <circle cx="40" cy="40" r="37.500" />
            <ellipse cx="28" cy="31" rx="4.500" ry="5.500" fill="#000" stroke="none" />
            <ellipse cx="52" cy="31" rx="4.500" ry="5.500" fill="#000" stroke="none" />
            <path d="M16 44q24 9 48 0q-2 23-24 23T16 44z" strokeWidth="4" strokeLinejoin="round" />
            <path d="M18 54q22 7 44 0q-4 13-22 13T18 54z" fill="#000" stroke="none" />
          </svg>
        </IconButton>
        <IconButton label="Dictation" className="mb-1">
          <svg viewBox="0 0 56 86" className="h-[86px] w-14" fill="none" stroke="#000" strokeWidth="4.500" strokeLinecap="round">
            <rect x="15.500" y="3" width="25" height="52" rx="12.500" />
            <path d="M3 34v9q0 25 25 25t25-25v-9M28 68v14M10 83h36" />
          </svg>
        </IconButton>
      </div>
    </section>
  );
}

export default function App() {
  return (
    <div className="flex h-screen flex-col overflow-hidden bg-[#f4f1ea] font-['Inter',sans-serif] text-black">
      <ChatHeader />
      <Chat />
      <Composer />
      <Keyboard />
    </div>
  );
}
